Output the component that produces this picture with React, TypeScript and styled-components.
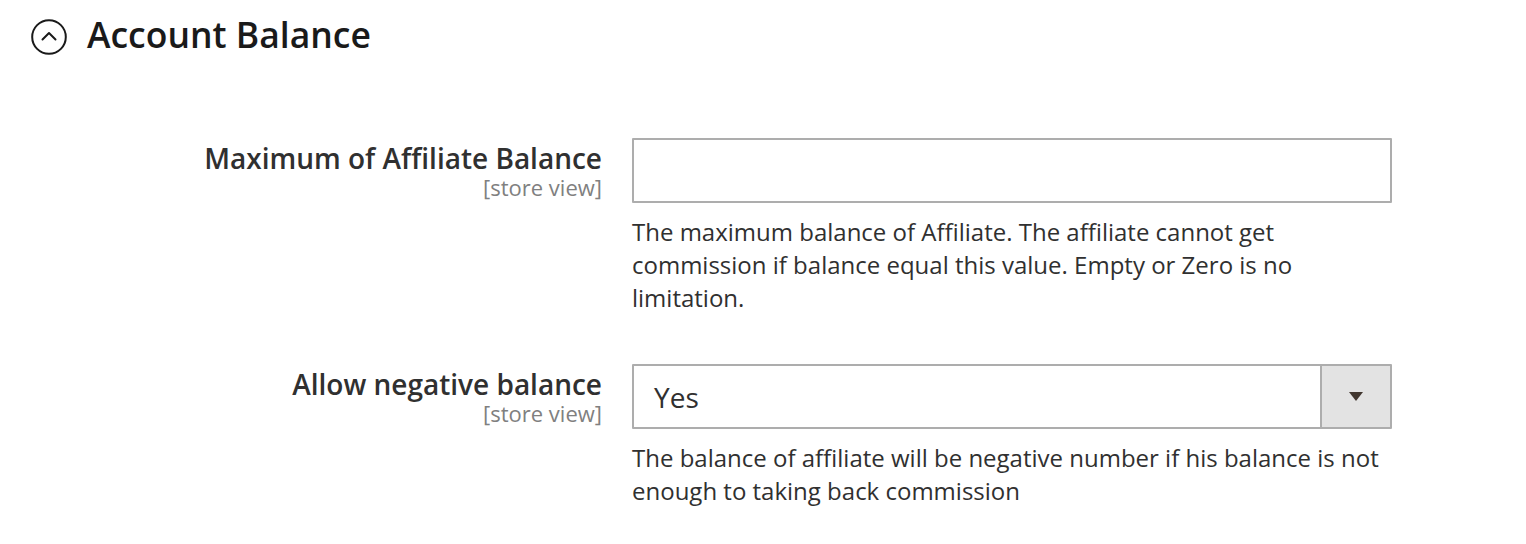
import styled, { createGlobalStyle } from 'styled-components';

const GlobalStyle = createGlobalStyle`
  html, body {
    margin: 0;
    padding: 0;
    background: #ffffff;
  }
  body {
    font-family: 'Open Sans', 'Liberation Sans', sans-serif;
    color: #303030;
  }
`;

type Field = {
  label: string;
  scope: string;
  kind: 'text' | 'select';
  value?: string;
  note: string;
};

const fields: Field[] = [
  {
    label: 'Maximum of Affiliate Balance',
    scope: '[store view]',
    kind: 'text',
    note: 'The maximum balance of Affiliate. The affiliate cannot get commission if balance equal this value. Empty or Zero is no limitation.',
  },
  {
    label: 'Allow negative balance',
    scope: '[store view]',
    kind: 'select',
    value: 'Yes',
    note: 'The balance of affiliate will be negative number if his balance is not enough to taking back commission',
  },
];

export default function App() {
  return (
    <>
      <GlobalStyle />
      <Section>
        <SectionHeader>
          <CollapseIcon viewBox="0 0 36 36" aria-hidden>
            <circle cx="18" cy="18" r="16.8" fill="none" stroke="#1a1a1a" strokeWidth="2" />
            <path
              d="M11.5 20.5 L18 14 L24.5 20.5"
              fill="none"
              stroke="#1a1a1a"
              strokeWidth="2"
              strokeLinecap="round"
              strokeLinejoin="round"
            />
          </CollapseIcon>
          <Title>Account Balance</Title>
        </SectionHeader>

        <Fieldset>
          {fields.map(field => (
            <Row key={field.label}>
              <LabelCell>
                <LabelText>{field.label}</LabelText>
                <Scope>{field.scope}</Scope>
              </LabelCell>
              <Control>
                {field.kind === 'text' ? (
                  <TextInput type="text" />
                ) : (
                  <SelectBox>
                    <SelectValue>{field.value}</SelectValue>
                    <SelectArrow>
                      <svg width="14" height="9" viewBox="0 0 14 9" aria-hidden>
                        <path d="M0 0 H14 L7 9 Z" fill="#41362f" />
                      </svg>
                    </SelectArrow>
                  </SelectBox>
                )}
                <Note>{field.note}</Note>
              </Control>
            </Row>
          ))}
        </Fieldset>
      </Section>
    </>
  );
}

const Section = styled.section`
  padding: 12px 0 0 31px;
`;

const SectionHeader = styled.div`
  display: flex;
  align-items: center;
  gap: 20px;
  height: 44px;
`;

const CollapseIcon = styled.svg`
  width: 36px;
  height: 36px;
  margin-top: 6px;
  flex: none;
`;

const Title = styled.h2`
  margin: 0;
  font-size: 35.5px;
  font-weight: 600;
  color: #1a1a1a;
  line-height: 44px;
`;

const Fieldset = styled.div`
  display: flex;
  flex-direction: column;
  gap: 50px;
  margin-top: 82px;
`;

const Row = styled.div`
  display: grid;
  grid-template-columns: 571px 760px;
  column-gap: 30px;
`;

const LabelCell = styled.div`
  display: flex;
  flex-direction: column;
  align-items: flex-end;
  text-align: right;
  padding-top: 4px;
`;

const LabelText = styled.span`
  font-size: 28px;
  font-weight: 600;
  line-height: 32px;
  color: #303030;
`;

const Scope = styled.span`
  font-size: 22px;
  line-height: 27px;
  color: #808080;
`;

const Control = styled.div`
  display: flex;
  flex-direction: column;
`;

const TextInput = styled.input`
  box-sizing: border-box;
  width: 100%;
  height: 65px;
  border: 2px solid #adadad;
  border-radius: 1px;
  padding: 0 20px;
  font-family: inherit;
  font-size: 28px;
  color: #303030;
  background: #ffffff;
  outline: none;
`;

const SelectBox = styled.div`
  box-sizing: border-box;
  display: flex;
  align-items: stretch;
  height: 65px;
  border: 2px solid #adadad;
  border-radius: 1px;
  background: #ffffff;
`;

const SelectValue = styled.span`
  flex: 1;
  display: flex;
  align-items: center;
  padding-left: 20px;
  font-size: 28px;
  color: #303030;
`;

const SelectArrow = styled.span`
  width: 68px;
  display: flex;
  align-items: center;
  justify-content: center;
  background: #e3e3e3;
  border-left: 2px solid #adadad;
`;

const Note = styled.p`
  margin: 12px 0 0;
  font-size: 24px;
  line-height: 33px;
  color: #303030;
`;
